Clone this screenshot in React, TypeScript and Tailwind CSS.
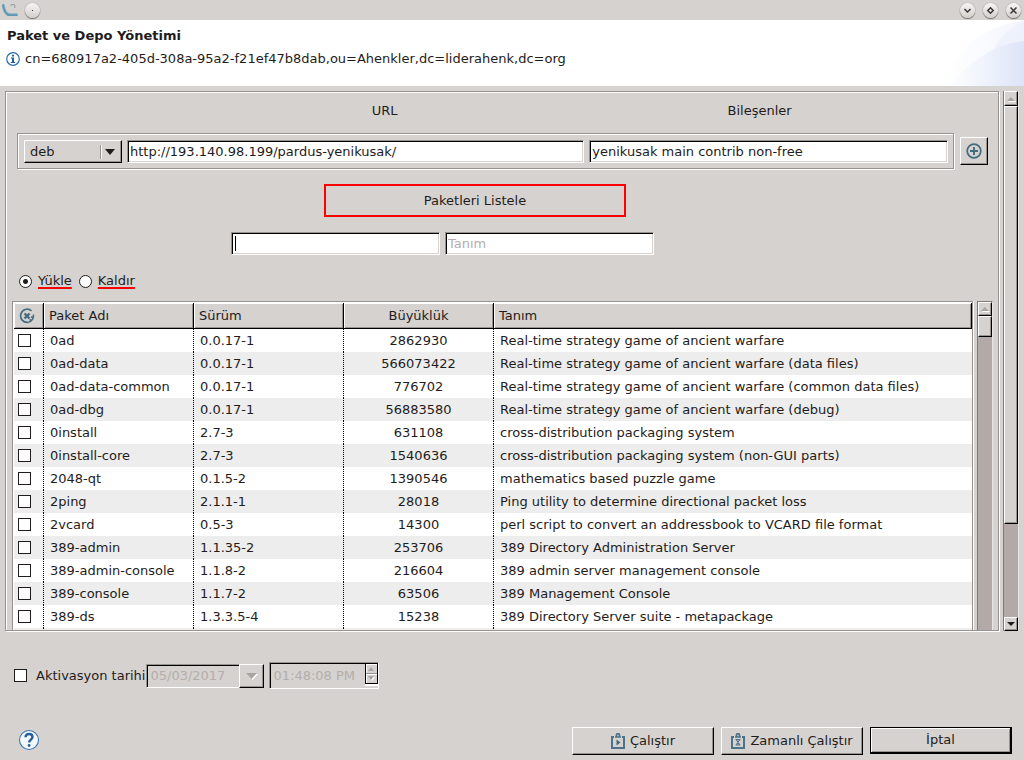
import React from "react";

const RAISED =
  "border border-t-white border-l-white border-b-black border-r-black bg-[#d6d2d0] shadow-[inset_-1px_-1px_0_#999390]";
const SUNKEN =
  "border border-t-[#999390] border-l-[#999390] border-b-white border-r-white shadow-[inset_1px_1px_0_#000,inset_-1px_-1px_0_#d6d2d0]";
const ETCHED = "border border-[#999390] shadow-[1px_1px_0_#fff,inset_1px_1px_0_#fff]";

const packages: [string, string, string, string][] = [
  ["0ad", "0.0.17-1", "2862930", "Real-time strategy game of ancient warfare"],
  ["0ad-data", "0.0.17-1", "566073422", "Real-time strategy game of ancient warfare (data files)"],
  ["0ad-data-common", "0.0.17-1", "776702", "Real-time strategy game of ancient warfare (common data files)"],
  ["0ad-dbg", "0.0.17-1", "56883580", "Real-time strategy game of ancient warfare (debug)"],
  ["0install", "2.7-3", "631108", "cross-distribution packaging system"],
  ["0install-core", "2.7-3", "1540636", "cross-distribution packaging system (non-GUI parts)"],
  ["2048-qt", "0.1.5-2", "1390546", "mathematics based puzzle game"],
  ["2ping", "2.1.1-1", "28018", "Ping utility to determine directional packet loss"],
  ["2vcard", "0.5-3", "14300", "perl script to convert an addressbook to VCARD file format"],
  ["389-admin", "1.1.35-2", "253706", "389 Directory Administration Server"],
  ["389-admin-console", "1.1.8-2", "216604", "389 admin server management console"],
  ["389-console", "1.1.7-2", "63506", "389 Management Console"],
  ["389-ds", "1.3.3.5-4", "15238", "389 Directory Server suite - metapackage"],
];

function WindowButton({ label, children }: { label: string; children: React.ReactNode }) {
  return (
    <button
      aria-label={label}
      className="flex size-[15px] items-center justify-center rounded-full bg-linear-to-b from-[#f8f7f6] to-[#d2cecb] shadow-[0_1px_1px_#6f6b68,0_0_1px_#6f6b68]"
    >
      <svg width="15" height="15" viewBox="0 0 15 15" fill="none" stroke="#3a3635" strokeWidth="1.500">
        {children}
      </svg>
    </button>
  );
}

function TitleBar() {
  return (
    <div className="flex h-5 shrink-0 items-center justify-between pr-[3px] pl-[2px]">
      <div className="flex items-center gap-[7px]">
        <svg width="16" height="16" viewBox="0 0 16 16" fill="none">
          <path d="M1 2 C2 9 4 12.500 8 12.500 H15.500" stroke="#93b6c8" strokeWidth="3" />
          <path d="M1 2.500 C2 9.500 4 13.200 8 13.200 H15.500" stroke="#5f97b3" strokeWidth="1.800" />
          <path d="M8.500 3.500 L10 2.500 H12 L12.800 4 V6" stroke="#9a9fa5" strokeWidth="1.200" />
        </svg>
        <WindowButton label="Pencere menüsü">
          <path d="M7 7.500 h1" strokeWidth="1" />
        </WindowButton>
      </div>
      <div className="flex items-center gap-2">
        <WindowButton label="Küçült">
          <path d="M4.500 6 L7.500 9 L10.500 6" />
        </WindowButton>
        <WindowButton label="Büyüt">
          <path d="M7.500 4.800 L10.200 7.500 L7.500 10.200 L4.800 7.500 Z" />
        </WindowButton>
        <WindowButton label="Kapat">
          <path d="M4.500 4.500 L10.500 10.500 M10.500 4.500 L4.500 10.500" />
        </WindowButton>
      </div>
    </div>
  );
}

function Header() {
  return (
    <header className="relative h-[66px] shrink-0 bg-white">
      <svg className="absolute top-0 right-0" width="90" height="66" viewBox="0 0 90 66">
        <defs>
          <linearGradient id="swoosh" x1="0" x2="1" y1="0" y2="0">
            <stop offset="0" stopColor="#fdfeff" />
            <stop offset="0.5" stopColor="#eef2fc" />
            <stop offset="1" stopColor="#dde4f8" />
          </linearGradient>
          <linearGradient id="swooshLight" x1="0" x2="1" y1="0" y2="0">
            <stop offset="0" stopColor="#ffffff" />
            <stop offset="1" stopColor="#f3f6fd" />
          </linearGradient>
        </defs>
        <path d="M8 66 C20 34 42 8 90 0 V66 Z" fill="url(#swooshLight)" />
        <path d="M46 66 C54 32 68 10 90 1 V66 Z" fill="#ebf0fb" opacity="0.8" />
        <path d="M16 66 C34 42 60 24 90 21 V66 Z" fill="url(#swoosh)" />
      </svg>
      <div className="relative flex flex-col pt-2">
        <h1 className="pl-[7px] text-[13px] leading-4 font-bold">Paket ve Depo Yönetimi</h1>
        <div className="mt-[7px] flex items-center gap-[5px] pl-[6px]">
          <svg width="14" height="14" viewBox="0 0 14 14">
            <circle cx="7" cy="7" r="6.300" fill="#fff" stroke="#2a6cab" strokeWidth="1.200" />
            <path d="M6 2.800 h2 v1.700 h-2z M5 5.500 h3 v4.500 h1.200 v1 h-4.400 v-1 h1.200 v-3.500 h-1z" fill="#1c5f9f" />
          </svg>
          <p className="leading-4">cn=680917a2-405d-308a-95a2-f21ef47b8dab,ou=Ahenkler,dc=liderahenk,dc=org</p>
        </div>
      </div>
    </header>
  );
}

function Check({ label, id }: { label?: string; id?: string }) {
  return (
    <input
      id={id}
      type="checkbox"
      aria-label={label}
      className="block size-[13px] shrink-0 appearance-none border border-[#1f1c1b] bg-white checked:bg-[#1f1c1b]"
    />
  );
}

function Arrow({ up = false, disabled = false }: { up?: boolean; disabled?: boolean }) {
  const d = up ? "M0 5 L4 1 L8 5 Z" : "M0 1 H8 L4 5 Z";
  return (
    <svg width="9" height="6" viewBox="0 0 9 6">
      {disabled && <path d={d} transform="translate(1 1)" fill="#fff" />}
      <path d={d} fill={disabled ? "#aaa4a1" : "#1f1c1b"} />
    </svg>
  );
}

function SourceRow() {
  return (
    <section className="flex flex-col pr-[10px] pl-[11px]">
      <div className="flex pt-[11px] pb-[14px] text-center leading-4">
        <div className="w-[103px] shrink-0" />
        <label htmlFor="url" className="flex-[457]">
          <span className="pl-[70px]">URL</span>
        </label>
        <label htmlFor="components" className="flex-[359]">Bileşenler</label>
        <div className="w-12 shrink-0" />
      </div>
      <div className="flex items-center gap-[6px]">
        <div className={`flex min-w-0 flex-1 items-center gap-[5px] p-[6px] pr-[5px] pb-[5px] ${ETCHED}`}>
          <div className={`relative h-[23px] w-[98px] shrink-0 ${RAISED}`}>
            <select aria-label="Depo türü" className="block size-full appearance-none pl-[5px] outline-none">
              <option>deb</option>
              <option>deb-src</option>
            </select>
            <div className="pointer-events-none absolute inset-y-0 right-[6px] flex items-center gap-[3px]">
              <span className="h-[14px] w-[2px] border-l border-[#999390] bg-white" />
              <svg width="10" height="6" viewBox="0 0 10 6">
                <path d="M0 0 H10 L5 6 Z" fill="#1f1c1b" />
              </svg>
            </div>
          </div>
          <input
            id="url"
            defaultValue="http://193.140.98.199/pardus-yenikusak/"
            className={`h-[23px] min-w-0 flex-[449] bg-white px-[2px] outline-none ${SUNKEN}`}
          />
          <input
            id="components"
            defaultValue="yenikusak main contrib non-free"
            className={`h-[23px] min-w-0 flex-[351] bg-white px-[2px] outline-none ${SUNKEN}`}
          />
        </div>
        <button aria-label="Depo ekle" className={`flex size-7 shrink-0 items-center justify-center ${RAISED}`}>
          <svg width="16" height="16" viewBox="0 0 16 16" fill="none" stroke="#446a7e">
            <circle cx="8" cy="8" r="6.800" strokeWidth="1.700" />
            <path d="M8 4 V12 M4 8 H12" strokeWidth="1.900" />
          </svg>
        </button>
      </div>
    </section>
  );
}

function ModeOption({ id, label, checked }: { id: string; label: string; checked?: boolean }) {
  return (
    <div className="flex items-center gap-[6px]">
      <input
        id={id}
        type="radio"
        name="mode"
        defaultChecked={checked}
        className="size-[13px] appearance-none rounded-full border border-[#1f1c1b] bg-white checked:bg-[radial-gradient(circle,#1f1c1b_0_2px,#fff_3px)]"
      />
      <label htmlFor={id} className="leading-4 underline decoration-[#f00] decoration-2 underline-offset-2 [text-decoration-skip-ink:none]">
        {label}
      </label>
    </div>
  );
}

function PackageTable() {
  const head = "h-[26px] border-r border-b border-black bg-[#d6d2d0] font-normal shadow-[inset_1px_1px_0_#fff,inset_-1px_-1px_0_#999390]";
  const cell = "h-[23px] border-r border-dotted border-black";
  return (
    <div className="flex min-h-0 flex-1 pr-[5px] pl-[6px]">
      <div className="min-w-0 flex-1 overflow-hidden border border-b-0 border-[#999390] shadow-[1px_0_0_#fff]">
        <div className="border-t border-l border-white bg-white">
          <table className="w-full table-fixed border-separate border-spacing-0">
            <thead>
              <tr>
                <th className={`w-[30px] ${head}`}>
                  <svg className="ml-[5px]" width="16" height="16" viewBox="0 0 16 16" fill="none" stroke="#446a7e">
                    <path d="M12.500 2.800 A6.600 6.600 0 1 0 9.500 14.300" strokeWidth="1.700" />
                    <path d="M9.500 14.300 A6.600 6.600 0 0 0 14.400 6.500 M10.500 11.500 L12.500 12.500 M12 9 L14 9.500" strokeWidth="1.500" />
                    <path d="M5.500 5.500 L10.500 10.500 M10.500 5.500 L5.500 10.500" strokeWidth="2.400" />
                  </svg>
                </th>
                <th className={`w-[150px] pl-[5px] text-left ${head}`}>Paket Adı</th>
                <th className={`w-[150px] pl-[5px] text-left ${head}`}>Sürüm</th>
                <th className={`w-[150px] ${head}`}>Büyüklük</th>
                <th className={`pl-[5px] text-left ${head}`}>Tanım</th>
              </tr>
            </thead>
            <tbody>
              {packages.map(([name, version, size, description]) => (
                <tr key={name} className="even:bg-[#ededed]">
                  <td className={`pl-1 ${cell}`}>
                    <Check label={name} />
                  </td>
                  <td className={`pl-[6px] ${cell}`}>{name}</td>
                  <td className={`pl-[6px] ${cell}`}>{version}</td>
                  <td className={`text-center ${cell}`}>{size}</td>
                  <td className="h-[23px] truncate pl-[6px]">{description}</td>
                </tr>
              ))}
              <tr className="bg-[#ededed]">
                <td className={cell} />
                <td className={cell} />
                <td className={cell} />
                <td className={cell} />
                <td />
              </tr>
            </tbody>
          </table>
        </div>
      </div>
      <div className="ml-1 flex w-4 shrink-0 flex-col border-t border-r border-l border-t-[#7f7875] border-r-[#e8e6e5] border-l-[#7f7875] bg-[#b3a9a6]">
        <button aria-label="Tabloyu yukarı kaydır" className={`flex h-[14px] shrink-0 items-center justify-center ${RAISED}`}>
          <Arrow up disabled />
        </button>
        <div className={`h-[21px] shrink-0 ${RAISED}`} />
      </div>
    </div>
  );
}

function MainPanel() {
  return (
    <main className={`flex min-w-0 flex-1 flex-col overflow-hidden ${ETCHED}`}>
      <SourceRow />
      <div className="mt-[15px] flex justify-center pr-[54px]">
        <button className="h-[33px] w-[302px] border-2 border-[#f00]">Paketleri Listele</button>
      </div>
      <div className="mt-[15px] flex justify-center gap-[5px] pr-[119px]">
        <div className="relative w-[209px]">
          <input autoFocus aria-label="Paket adı" className={`block h-[23px] w-full bg-white px-[2px] caret-transparent outline-none ${SUNKEN}`} />
          <span className="absolute top-1 left-1 h-[15px] w-px bg-black" />
        </div>
        <input
          aria-label="Tanım"
          placeholder="Tanım"
          className={`h-[23px] w-[209px] bg-white px-[2px] outline-none placeholder:text-[#b3aeab] ${SUNKEN}`}
        />
      </div>
      <div className="mt-[18px] mb-3 flex gap-[7px] pl-[13px]">
        <ModeOption id="install" label="Yükle" checked />
        <ModeOption id="remove" label="Kaldır" />
      </div>
      <PackageTable />
    </main>
  );
}

function PageScrollbar() {
  return (
    <div className="flex w-4 shrink-0 flex-col border-r border-l border-r-[#e8e6e5] border-l-[#7f7875] bg-[#b3a9a6]">
      <button aria-label="Yukarı kaydır" className={`flex h-[15px] shrink-0 items-center justify-center ${RAISED}`}>
        <Arrow up disabled />
      </button>
      <div className={`flex-[418] ${RAISED}`} />
      <div className="flex-[93]" />
      <button aria-label="Aşağı kaydır" className={`flex h-[14px] shrink-0 items-center justify-center ${RAISED}`}>
        <Arrow />
      </button>
    </div>
  );
}

function ClipboardIcon({ children }: { children: React.ReactNode }) {
  return (
    <svg width="14" height="16" viewBox="0 0 14 16" fill="none" stroke="#4d7388">
      <path d="M3 4 H1 V15 H13 V4 H11" strokeWidth="2" />
      <path d="M4 4 H10 M5.500 3.500 V2 A1.500 1.300 0 0 1 8.500 2 V3.500" strokeWidth="1.700" />
      {children}
    </svg>
  );
}

function Activation() {
  return (
    <div className="flex items-center pl-[14px]">
      <div className="flex items-center gap-[9px]">
        <Check id="activation" />
        <label htmlFor="activation">Aktivasyon tarihi</label>
      </div>
      <div className={`ml-px flex h-6 w-[118px] ${SUNKEN}`}>
        <input disabled aria-label="Tarih" defaultValue="05/03/2017" className="min-w-0 flex-1 pl-[3px] text-[#b3aeab]" />
        <button disabled aria-label="Tarih seç" className={`-my-px -mr-px flex w-[25px] items-center justify-center ${RAISED}`}>
          <svg width="12" height="8" viewBox="0 0 12 8">
            <path d="M1 2 H12 L6.500 8 Z" fill="#fff" />
            <path d="M0 1 H11 L5.500 7 Z" fill="#aaa4a1" />
          </svg>
        </button>
      </div>
      <div className={`ml-[5px] flex h-[27px] w-[110px] ${SUNKEN}`}>
        <input disabled aria-label="Saat" defaultValue="01:48:08 PM" className="min-w-0 flex-1 pl-[3px] text-[#b3aeab]" />
        <div className="mb-1 flex w-[13px] flex-col border border-black shadow-[0_2px_0_#fff]">
          <button disabled aria-label="Saati artır" className="flex flex-1 items-center justify-center border-b border-[#999390] shadow-[inset_1px_1px_0_#fff]">
            <svg width="7" height="4" viewBox="0 0 7 4"><path d="M0 4 L3 0 L6 4 Z" fill="#aaa4a1" /></svg>
          </button>
          <button disabled aria-label="Saati azalt" className="flex flex-1 items-center justify-center shadow-[inset_1px_1px_0_#fff]">
            <svg width="7" height="5" viewBox="0 0 7 5"><path d="M1 1 H7 L4 5 Z" fill="#fff" /><path d="M0 0 H6 L3 4 Z" fill="#aaa4a1" /></svg>
          </button>
        </div>
      </div>
    </div>
  );
}

function Footer() {
  const button = "flex h-7 w-[142px] items-center justify-center gap-[5px]";
  return (
    <footer className="flex items-center justify-between pr-3 pl-[18px]">
      <button aria-label="Yardım" className="mb-[2px]">
        <svg width="22" height="22" viewBox="0 0 22 22">
          <circle cx="11" cy="11" r="9.500" fill="#f3f8fc" stroke="#3b78b0" strokeWidth="1.100" />
          <path d="M7.500 8.200 C7.500 3.800 14.500 4 14.500 8 C14.500 10.500 11.200 10.800 11.200 13.500" fill="none" stroke="#245e9c" strokeWidth="2.400" />
          <circle cx="11.100" cy="16.500" r="1.400" fill="#245e9c" />
        </svg>
      </button>
      <div className="flex gap-[7px]">
        <button className={`${button} ${RAISED}`}>
          <ClipboardIcon>
            <path d="M5.500 6.500 L9.500 9.500 L5.500 12.500 Z" fill="#446a7e" stroke="none" />
          </ClipboardIcon>
          Çalıştır
        </button>
        <button className={`${button} ${RAISED}`}>
          <ClipboardIcon>
            <path d="M4.500 6.500 H9.500 M4.500 12 H9.500 M5.500 7 L8.500 11.500 M8.500 7 L5.500 11.500" strokeWidth="1.200" />
          </ClipboardIcon>
          Zamanlı Çalıştır
        </button>
        <button className="h-[27px] w-[142px] border border-r-2 border-b-2 border-black shadow-[inset_1px_1px_0_#fff,inset_-1px_-1px_0_#999390]">
          İptal
        </button>
      </div>
    </footer>
  );
}

export default function App() {
  return (
    <div className="flex h-screen flex-col bg-[#d6d2d0] font-['DejaVu_Sans',sans-serif] text-[13px] leading-4 text-[#1f1c1b]">
      <TitleBar />
      <Header />
      <div className="flex min-h-0 flex-1 gap-1 pt-[5px] pr-[5px] pl-[5px]">
        <MainPanel />
        <PageScrollbar />
      </div>
      <div className="flex shrink-0 flex-col gap-[38px] pt-[31px] pb-[5px]">
        <Activation />
        <Footer />
      </div>
    </div>
  );
}
